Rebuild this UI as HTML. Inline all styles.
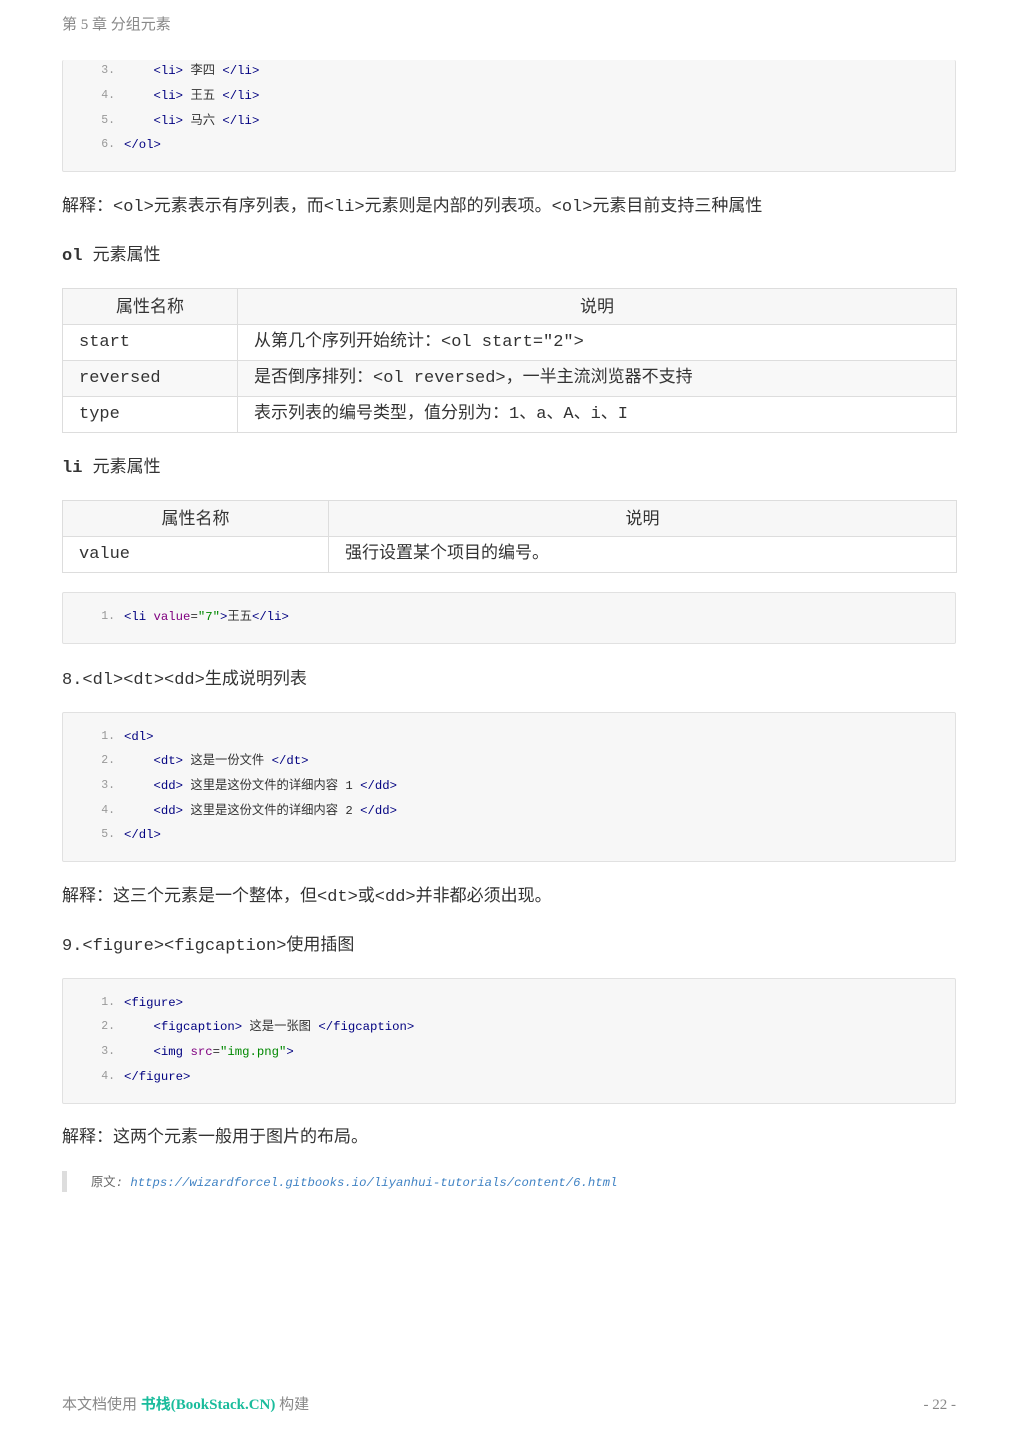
<!DOCTYPE html>
<html><head><meta charset="utf-8"><style>
body{margin:0;width:1019px;height:1440px;background:#fff;position:relative;font-family:"Liberation Mono","Noto Sans CJK SC",monospace;color:#333;}
.a{position:absolute;}
.hdr{left:62px;top:15px;font:15px/20px "Liberation Serif","Noto Sans CJK SC",serif;color:#888;}
.code{position:absolute;left:62px;width:894px;background:#f7f7f7;border:1px solid #e1e1e1;border-radius:2px;box-sizing:border-box;}
.ln{position:absolute;left:0;width:52px;text-align:right;font-size:11.5px;line-height:18px;color:#999;margin-top:2px;}
.cl{position:absolute;left:61px;font-size:12.3px;line-height:18px;color:#333;white-space:pre;margin-top:2px;}
.t{color:#000080}.at{color:#800080}.s{color:#080}
.p{position:absolute;left:62px;font-size:17px;line-height:22px;white-space:pre;margin-top:4px;}
table{position:absolute;left:62px;width:895px;border-collapse:collapse;font-size:17px;}
td,th{border:1px solid #ddd;height:36px;padding:0 16px;box-sizing:border-box;line-height:20px;}
th{font-weight:normal;background:#f7f7f7;font-family:"Liberation Sans","Noto Sans CJK SC",sans-serif;}
tr.g td{background:#f8f8f8}
</style></head><body>
<div class="a hdr">第 5 章 分组元素</div>

<div class="code" style="top:60px;height:112px;border-top:none">
<div class="ln" style="top:0px">3.</div><div class="cl" style="top:0px">    <span class="t">&lt;li&gt;</span> 李四 <span class="t">&lt;/li&gt;</span></div>
<div class="ln" style="top:25px">4.</div><div class="cl" style="top:25px">    <span class="t">&lt;li&gt;</span> 王五 <span class="t">&lt;/li&gt;</span></div>
<div class="ln" style="top:50px">5.</div><div class="cl" style="top:50px">    <span class="t">&lt;li&gt;</span> 马六 <span class="t">&lt;/li&gt;</span></div>
<div class="ln" style="top:74px">6.</div><div class="cl" style="top:74px"><span class="t">&lt;/ol&gt;</span></div>
</div>

<div class="p" style="top:193px">解释：&lt;ol&gt;元素表示有序列表，而&lt;li&gt;元素则是内部的列表项。&lt;ol&gt;元素目前支持三种属性</div>
<div class="p" style="top:242px"><b>ol</b> 元素属性</div>

<table style="top:288px">
<tr><th style="width:175px">属性名称</th><th>说明</th></tr>
<tr><td>start</td><td>从第几个序列开始统计：&lt;ol start="2"&gt;</td></tr>
<tr class="g"><td>reversed</td><td>是否倒序排列：&lt;ol reversed&gt;，一半主流浏览器不支持</td></tr>
<tr><td>type</td><td>表示列表的编号类型，值分别为：1、a、A、i、I</td></tr>
</table>

<div class="p" style="top:454px"><b>li</b> 元素属性</div>
<table style="top:500px">
<tr><th style="width:266px">属性名称</th><th>说明</th></tr>
<tr><td>value</td><td>强行设置某个项目的编号。</td></tr>
</table>

<div class="code" style="top:592px;height:52px">
<div class="ln" style="top:13px">1.</div><div class="cl" style="top:13px"><span class="t">&lt;li</span> <span class="at">value</span>=<span class="s">"7"</span><span class="t">&gt;</span>王五<span class="t">&lt;/li&gt;</span></div>
</div>

<div class="p" style="top:666px">8.&lt;dl&gt;&lt;dt&gt;&lt;dd&gt;生成说明列表</div>

<div class="code" style="top:712px;height:150px">
<div class="ln" style="top:13px">1.</div><div class="cl" style="top:13px"><span class="t">&lt;dl&gt;</span></div>
<div class="ln" style="top:37px">2.</div><div class="cl" style="top:37px">    <span class="t">&lt;dt&gt;</span> 这是一份文件 <span class="t">&lt;/dt&gt;</span></div>
<div class="ln" style="top:62px">3.</div><div class="cl" style="top:62px">    <span class="t">&lt;dd&gt;</span> 这里是这份文件的详细内容 1 <span class="t">&lt;/dd&gt;</span></div>
<div class="ln" style="top:87px">4.</div><div class="cl" style="top:87px">    <span class="t">&lt;dd&gt;</span> 这里是这份文件的详细内容 2 <span class="t">&lt;/dd&gt;</span></div>
<div class="ln" style="top:111px">5.</div><div class="cl" style="top:111px"><span class="t">&lt;/dl&gt;</span></div>
</div>

<div class="p" style="top:883px">解释：这三个元素是一个整体，但&lt;dt&gt;或&lt;dd&gt;并非都必须出现。</div>
<div class="p" style="top:932px">9.&lt;figure&gt;&lt;figcaption&gt;使用插图</div>

<div class="code" style="top:978px;height:126px">
<div class="ln" style="top:13px">1.</div><div class="cl" style="top:13px"><span class="t">&lt;figure&gt;</span></div>
<div class="ln" style="top:37px">2.</div><div class="cl" style="top:37px">    <span class="t">&lt;figcaption&gt;</span> 这是一张图 <span class="t">&lt;/figcaption&gt;</span></div>
<div class="ln" style="top:62px">3.</div><div class="cl" style="top:62px">    <span class="t">&lt;img</span> <span class="at">src</span>=<span class="s">"img.png"</span><span class="t">&gt;</span></div>
<div class="ln" style="top:87px">4.</div><div class="cl" style="top:87px"><span class="t">&lt;/figure&gt;</span></div>
</div>

<div class="p" style="top:1124px">解释：这两个元素一般用于图片的布局。</div>

<div class="a" style="left:62px;top:1171px;width:5px;height:21px;background:#ddd"></div>
<div class="a" style="left:91px;top:1173px;font-size:12.3px;line-height:18px;color:#666;white-space:pre"><span style="font-family:'Liberation Sans','Noto Sans CJK SC',sans-serif">原文</span><i>: </i><i style="color:#4183c4">https://wizardforcel.gitbooks.io/liyanhui-tutorials/content/6.html</i></div>

<div class="a" style="left:62px;top:1395px;font:15px/20px 'Liberation Serif','Noto Sans CJK SC',serif;color:#888">本文档使用 <span style="color:#1abc9c;font-weight:bold">书栈(BookStack.CN)</span> 构建</div>
<div class="a" style="right:63px;top:1395px;font:15px/20px 'Liberation Serif',serif;color:#888">- 22 -</div>
</body></html>
